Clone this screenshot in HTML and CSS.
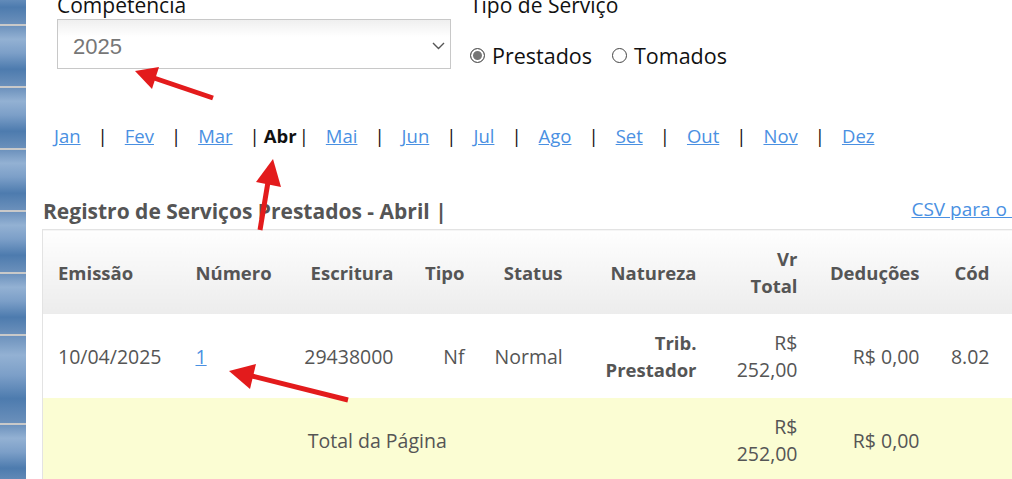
FILE: index.html
```html
<!DOCTYPE html>
<html lang="pt-BR">
<head>
    <meta charset="UTF-8">
    <meta name="viewport" content="width=device-width, initial-scale=1.0">
    <title>Registro de Serviços</title>
    <link rel="stylesheet" href="styles.css">
</head>
<body>
<div class="layout">
    <aside class="sidebar">
        <div class="tile tile-top"></div>
        <div class="tile"></div>
        <div class="tile"></div>
        <div class="tile"></div>
        <div class="tile"></div>
        <div class="tile"></div>
        <div class="tile tile-tall"></div>
        <div class="tile"></div>
    </aside>

    <main class="content">
        <div class="filters">
            <div class="field">
                <label class="field-label" for="competencia">Competencia</label>
                <div class="select-box">
                    <select class="select" id="competencia">
                        <option>2025</option>
                        <option>2024</option>
                    </select>
                    <svg class="chevron" width="13" height="8" viewBox="0 0 13 8">
                        <polyline points="1,1 6.5,6.5 12,1" fill="none" stroke="#555" stroke-width="1.4"/>
                    </svg>
                </div>
            </div>
            <div class="field">
                <span class="field-label">Tipo de Serviço</span>
                <div class="radios">
                    <label class="radio"><input type="radio" name="tipo" checked> Prestados</label>
                    <label class="radio"><input type="radio" name="tipo"> Tomados</label>
                </div>
            </div>
        </div>

        <nav class="months">
            <a href="#">Jan</a><span class="sep">|</span>
            <a href="#">Fev</a><span class="sep">|</span>
            <a href="#">Mar</a><span class="sep">|</span>
            <strong class="month-current">Abr</strong><span class="sep">|</span>
            <a href="#">Mai</a><span class="sep">|</span>
            <a href="#">Jun</a><span class="sep">|</span>
            <a href="#">Jul</a><span class="sep">|</span>
            <a href="#">Ago</a><span class="sep">|</span>
            <a href="#">Set</a><span class="sep">|</span>
            <a href="#">Out</a><span class="sep">|</span>
            <a href="#">Nov</a><span class="sep">|</span>
            <a href="#">Dez</a>
        </nav>

        <div class="report-head">
            <h2 class="report-title">Registro de Serviços Prestados - Abril |</h2>
            <a class="csv-link" href="#">CSV para o Excel</a>
        </div>

        <table class="grid">
            <colgroup>
                <col class="c-emissao"><col class="c-numero"><col class="c-escritura">
                <col class="c-tipo"><col class="c-status"><col class="c-natureza">
                <col class="c-total"><col class="c-deducoes"><col class="c-cod">
                <col class="c-aliq"><col class="c-iss">
            </colgroup>
            <thead>
                <tr>
                    <th class="left">Emissão</th>
                    <th class="left">Número</th>
                    <th>Escritura</th>
                    <th>Tipo</th>
                    <th>Status</th>
                    <th>Natureza</th>
                    <th>Vr Total</th>
                    <th>Deduções</th>
                    <th>Cód</th>
                    <th>Alíquota</th>
                    <th>ISS</th>
                </tr>
            </thead>
            <tbody>
                <tr>
                    <td class="left">10/04/2025</td>
                    <td class="left"><a href="#">1</a></td>
                    <td>29438000</td>
                    <td>Nf</td>
                    <td>Normal</td>
                    <td><strong class="nature">Trib. Prestador</strong></td>
                    <td>R$ 252,00</td>
                    <td>R$ 0,00</td>
                    <td>8.02</td>
                    <td>2,00%</td>
                    <td>R$ 5,04</td>
                </tr>
            </tbody>
            <tfoot>
                <tr>
                    <td colspan="6" class="center">Total da Página</td>
                    <td>R$ 252,00</td>
                    <td>R$ 0,00</td>
                    <td></td>
                    <td></td>
                    <td>R$ 5,04</td>
                </tr>
            </tfoot>
        </table>
    </main>
</div>

<svg class="marks" width="1012" height="479" viewBox="0 0 1012 479">
    <g fill="#e31b1c" stroke="#e31b1c">
        <line x1="213" y1="98" x2="154" y2="78" stroke-width="5"/>
        <polygon points="135,71 159,67 152,89" stroke="none"/>
        <line x1="260" y1="230" x2="268" y2="182" stroke-width="5"/>
        <polygon points="273,159 281,187 256,182" stroke="none"/>
        <line x1="348" y1="400" x2="252" y2="376" stroke-width="5"/>
        <polygon points="229,371 256,364 250,389" stroke="none"/>
    </g>
</svg>
</body>
</html>
```

FILE: styles.css
```css
/* Page frame */
html, body { margin: 0; overflow: hidden; background: #fff; }
body { font-family: "Open Sans", "Liberation Sans", sans-serif; color: #555; }
.layout { display: flex; width: 1240px; }

/* Left menu strip */
.sidebar { width: 26px; flex: none; display: flex; flex-direction: column; gap: 2px; background: #c9c9c9; margin-top: -36px; }
.tile { height: 60px; background: linear-gradient(to bottom, #6d92bd 0%, #93b1d3 22%, #7c9fc8 45%, #4d7bae 72%, #6b90bb 100%); }
.tile-top { height: 60px; }
.tile-tall { height: 87px; }

/* Main column */
.content { flex: 1; padding-left: 16px; }

.filters { display: flex; gap: 19px; padding-left: 15px; margin-top: -9px; }
.field { display: flex; flex-direction: column; }
.field-label { font-size: 21px; line-height: 28px; color: #111; }
.select-box { position: relative; width: 394px; }
.select { appearance: none; -webkit-appearance: none; width: 100%; height: 50px; border: 1px solid #c8c8c8; border-radius: 0; padding: 5px 15px 0; font-family: "Liberation Sans", Arial, sans-serif; font-size: 22px; color: #777; background: linear-gradient(to bottom, #efefef 0%, #fff 35%); }
.chevron { position: absolute; left: 375px; top: 23px; pointer-events: none; }

.radios { display: flex; gap: 20px; align-items: center; height: 72px; }
.radio { display: flex; align-items: center; gap: 7px; font-size: 21.5px; color: #111; }
.radio input { appearance: none; -webkit-appearance: none; margin: 0; width: 15px; height: 15px; border: 1px solid #444; border-radius: 50%; background: #fff; }
.radio input:checked { background: #777; box-shadow: inset 0 0 0 2px #fff; border-color: #555; }

/* Month links */
.months { display: flex; align-items: baseline; padding-left: 12px; margin-top: 32px; font-size: 18.5px; line-height: 26px; }
.months a { color: #4a90e2; }
.months .sep { padding: 0 17px; color: #111; }
.month-current { color: #111; margin: 0 -15px 0 -13px; }

/* Report */
.report-head { display: flex; justify-content: space-between; align-items: center; margin-top: 47px; width: 1015px; }
.report-title { margin: 0 0 0 1px; font-size: 21px; line-height: 30px; font-weight: 700; color: #555; }
.csv-link { color: #4a90e2; font-size: 19px; margin-top: -4px; }

.grid { border-collapse: collapse; table-layout: fixed; width: 1192px; margin-top: 3px; border-top: 1px solid #e3e3e3; border-left: 1px solid #e3e3e3; }
.c-emissao { width: 138px; }
.c-numero { width: 107px; }
.c-escritura { width: 121px; }
.c-tipo { width: 71px; }
.c-status { width: 98px; }
.c-natureza { width: 134px; }
.c-total { width: 101px; }
.c-deducoes { width: 122px; }
.c-cod { width: 70px; }
.c-aliq { width: 120px; }
.c-iss { width: 110px; }
.grid th, .grid td { padding: 15px; line-height: 27px; text-align: right; vertical-align: middle; }
.grid th { font-size: 18.5px; font-weight: 700; color: #555; background: linear-gradient(to bottom, #fefefe 0%, #ececec 100%); }
.grid td { font-size: 19.5px; color: #555; }
.grid .left { text-align: left; }
.grid .center { text-align: center; }
.grid td a { color: #4a90e2; }
.nature { font-size: 18.5px; }
.grid tfoot td { background: #fbfdd3; }
.grid tbody td { background: #fff; }

/* Annotation arrows */
.marks { position: absolute; left: 0; top: 0; pointer-events: none; }
```
